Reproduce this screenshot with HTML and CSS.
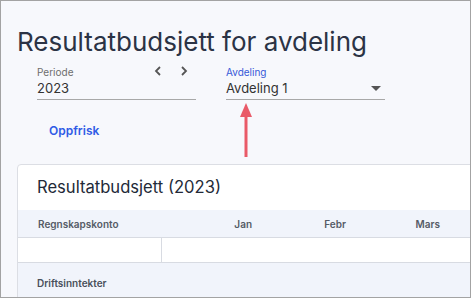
FILE: index.html
```html
<!DOCTYPE html>
<html lang="no">

<head>
    <meta charset="UTF-8">
    <meta name="viewport" content="width=device-width, initial-scale=1.0">
    <title>Resultatbudsjett</title>
    <link rel="stylesheet" href="styles.css">
</head>

<body>
    <div class="frame">
        <h1 class="page-title">Resultatbudsjett for avdeling</h1>

        <div class="filters">
            <div class="field field-period">
                <div class="field-head">
                    <span class="field-label">Periode</span>
                    <span class="nav">
                        <svg width="8" height="10" viewBox="0 0 8 10"><path d="M6 1 L2 5 L6 9" fill="none" stroke="#555" stroke-width="1.8"/></svg>
                        <svg width="8" height="10" viewBox="0 0 8 10"><path d="M2 1 L6 5 L2 9" fill="none" stroke="#555" stroke-width="1.8"/></svg>
                    </span>
                </div>
                <div class="field-value">2023</div>
            </div>

            <div class="field field-dept">
                <div class="field-label active">Avdeling</div>
                <div class="field-value">
                    <span>Avdeling 1</span>
                    <svg class="caret" width="10" height="5" viewBox="0 0 10 5"><path d="M0 0 H10 L5 5 Z" fill="#555"/></svg>
                </div>
                <!-- pil som peker på avdelingsvelgeren -->
                <svg class="pointer" width="14" height="54" viewBox="0 0 14 54">
                    <path d="M7 0 L13 14 L1 14 Z" fill="#e95a68"/>
                    <rect x="5.5" y="12" width="3" height="42" fill="#e95a68"/>
                </svg>
            </div>
        </div>

        <button class="refresh">Oppfrisk</button>

        <div class="card">
            <h2 class="card-title">Resultatbudsjett (2023)</h2>
            <div class="row head">
                <div class="cell first">Regnskapskonto</div>
                <div class="cell">Jan</div>
                <div class="cell">Febr</div>
                <div class="cell">Mars</div>
            </div>
            <div class="row blank">
                <div class="cell first"></div>
                <div class="cell"></div>
                <div class="cell"></div>
                <div class="cell"></div>
            </div>
            <div class="row group">
                <div class="cell first">Driftsinntekter</div>
            </div>
        </div>
    </div>
</body>

</html>
```

FILE: styles.css
```css
* {
    margin: 0;
    padding: 0;
    box-sizing: border-box;
}

body {
    font-family: Inter, "Noto Sans", sans-serif;
    color: #2d3446;
}

.frame {
    width: 471px;
    height: 298px;
    border: 1px solid #a3a3a3;
    background-color: #f7f8fc;
    overflow: hidden;
    padding: 25px 0 0 16px;
}

.page-title {
    font-size: 26px;
    font-weight: 400;
    line-height: 32px;
    color: #2b3345;
}

.filters {
    display: flex;
    gap: 30px;
    padding-left: 20px;
    margin-top: 8px;
}

.field {
    position: relative;
    width: 159px;
    border-bottom: 1px solid #a8a8a8;
    padding-bottom: 2px;
}

.field-head {
    display: flex;
    justify-content: space-between;
    align-items: center;
}

.nav {
    display: flex;
    gap: 18px;
    padding-right: 8px;
    margin-top: -3px;
}

.field-label {
    font-size: 10px;
    line-height: 13px;
    color: #6d6d6d;
}

.field-label.active {
    color: #3658d8;
}

.field-value {
    font-size: 13px;
    line-height: 18px;
    color: #333;
    display: flex;
    justify-content: space-between;
    align-items: center;
}

.caret {
    margin-right: 4px;
}

.pointer {
    position: absolute;
    left: 13px;
    top: 37px;
}

.refresh {
    display: block;
    margin: 23px 0 0 32px;
    border: none;
    background: none;
    font-family: inherit;
    font-size: 12px;
    font-weight: 600;
    color: #2f5be6;
}

.card {
    margin-top: 26px;
    width: 470px;
    background-color: #fff;
    border: 1px solid #dcdee4;
    border-radius: 4px 0 0 0;
}

.card-title {
    font-size: 16.6px;
    font-weight: 400;
    line-height: 20px;
    padding: 12px 0 13px 19px;
    color: #232a38;
}

.row {
    display: grid;
    grid-template-columns: 144px 94px 94px 94px;
}

.head {
    background-color: #f1f4fb;
    border-bottom: 1px solid #d8dbe2;
    height: 28px;
    align-items: center;
}

.head .cell {
    font-size: 10px;
    font-weight: 600;
    color: #555b66;
    text-align: right;
    padding-right: 4px;
}

.head .cell.first {
    text-align: left;
    padding-left: 20px;
}

.blank {
    height: 25px;
    border-bottom: 1px solid #d8dbe2;
}

.blank .cell.first {
    border-right: 1px solid #d8dbe2;
}

.group {
    background-color: #f1f4fb;
    height: 40px;
    align-items: center;
}

.group .cell {
    font-size: 10px;
    font-weight: 600;
    color: #4a505b;
    padding-left: 19px;
    padding-top: 0;
}
```
